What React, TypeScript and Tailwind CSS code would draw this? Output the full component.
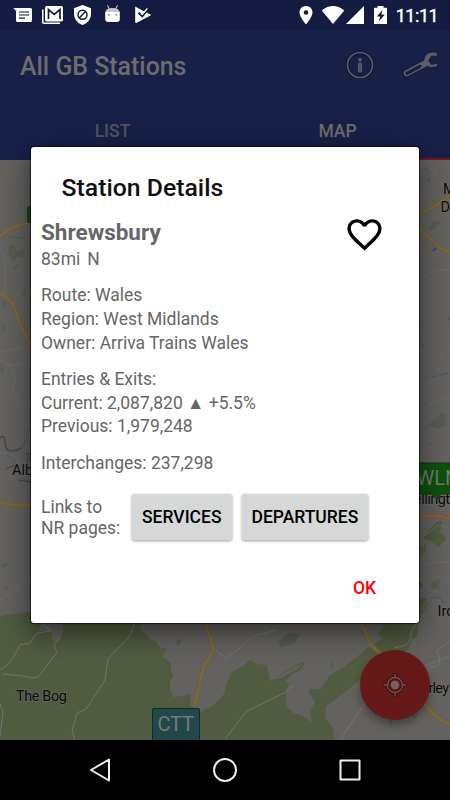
import type { ReactNode } from "react";

interface TextBlock {
    id: string;
    lines: string[];
}

const details: TextBlock[] = [
    { id: "route", lines: ["Route: Wales", "Region: West Midlands", "Owner: Arriva Trains Wales"] },
    { id: "usage", lines: ["Entries & Exits:", "Current: 2,087,820 ▲ +5.5%", "Previous: 1,979,248"] },
    { id: "interchanges", lines: ["Interchanges: 237,298"] },
];

function StatusBar() {
    return (
        <div className="h-[30px] shrink-0 bg-[#141a40] text-white">
            <svg width="450" height="30" viewBox="0 0 450 30" fill="currentColor">
                {/* messages */}
                <path d="M13.3 8H30.5Q32 8 32 9.5V20.500Q32 22 30.500 22H17.500Q16 22 16 20.500V11Z" />
                <path d="M19 12H29M19 15H29M19 18.200H25" stroke="#141a40" strokeWidth="1.200" />
                {/* mail */}
                <path d="M42.800 9.500V22.200Q42.800 23.300 44 23.300H60" fill="none" stroke="currentColor" strokeWidth="1.500" />
                <rect x="45" y="6" width="18" height="15.500" rx="1.500" />
                <path d="M48.500 19V9.500L54.200 14.300L60 9.500V19" fill="none" stroke="#141a40" strokeWidth="1.700" />
                {/* shield */}
                <path d="M82.500 5L91 8.300V14C91 19 87.500 23.300 82.500 25C77.500 23.300 74 19 74 14V8.300Z" />
                <circle cx="82.500" cy="14.700" r="4.500" fill="none" stroke="#141a40" strokeWidth="1.500" />
                <path d="M79.500 17.800L85.500 11.600" stroke="#141a40" strokeWidth="1.500" />
                {/* android head */}
                <path d="M109.300 9L107.500 5.300M115.700 9L117.500 5.300" stroke="#b9bac5" strokeWidth="1.200" />
                <path d="M105.300 12.500Q105.500 8 112.500 8Q119.500 8 119.700 12.500Z" fill="#c6c7d0" />
                <path d="M105.200 12H119.800V19Q119.800 22 116.800 22H108.200Q105.200 22 105.200 19Z" />
                <circle cx="108.800" cy="14.800" r=".9" fill="#777989" />
                <circle cx="116.200" cy="14.800" r=".9" fill="#777989" />
                {/* play protect */}
                <path d="M135.200 7.200Q135.200 6.500 136 7L142 10.300L150.500 14.500Q151.300 15 150.500 15.600L136.200 22.900Q135.200 23.300 135.200 22.300Z" />
                <path d="M138.500 12.800L142.300 16.200L148.500 8.500" fill="none" stroke="#141a40" strokeWidth="2" />
                <path d="M141 13.300L142.300 14.300L147.300 8.500" fill="none" stroke="currentColor" strokeWidth="1.300" />
                {/* location, wifi, signal, battery */}
                <path fillRule="evenodd" d="M306 6C302.300 6 299.500 8.800 299.500 12.400C299.500 17 306 24.300 306 24.300S312.500 17 312.500 12.400C312.500 8.800 309.700 6 306 6ZM306 10.200A2.300 2.300 0 1 1 306 14.800A2.300 2.300 0 1 1 306 10.200Z" />
                <path d="M321.800 10.400Q333 1.500 344.300 10.400L333 24Z" />
                <path d="M364 6V24H346Z" />
                <path d="M377.500 6H383.500V7.800H386Q387 7.800 387 8.800V24H374V8.800Q374 7.800 375 7.800H377.500Z" />
                <path d="M382.500 10L376.800 16.500H380.200L378.800 21.500L384.800 14.600H381.300Z" fill="#141a40" />
                <text x="395.700" y="22" fontSize="18" stroke="currentColor" strokeWidth=".4" textLength="43" fontFamily="Roboto, sans-serif">11:11</text>
            </svg>
        </div>
    );
}

function InfoIcon() {
    return (
        <svg className="size-8" viewBox="344 49 32 32" fill="none">
            <circle cx="360" cy="65" r="12.500" stroke="#10142e" strokeWidth="3.200" />
            <circle cx="360" cy="65" r="12.500" stroke="#5b5d68" strokeWidth="1.600" />
            <rect x="358.500" y="63" width="3" height="9" rx="1" fill="#4a4e61" stroke="#5b5d68" />
            <circle cx="360" cy="59.700" r="1.700" fill="#5b5d68" />
        </svg>
    );
}

function WrenchIcon() {
    return (
        <svg className="h-8 w-10" viewBox="400 49 40 32" fill="#5b5d68" stroke="#10142e" strokeWidth=".8">
            <path
                fillRule="evenodd"
                d="M437.500 53.200C433.500 51 427.800 52 425 56Q423.800 58 424 60L404.500 70.500Q402.300 72.300 403.600 74.800Q405 77.500 407.600 76.700L427.600 66.300Q430.500 68.800 437.500 66.500L437.700 63.300L431.500 64.300L428.800 60.800L431.300 56.300L437.500 56.200ZM406.500 72.200L419.500 65.300Q421.500 64.600 421.300 66.200Q421 67.300 419.500 68L407.800 74.200Q406 74.800 405.700 73.400Q405.700 72.600 406.500 72.200Z"
            />
        </svg>
    );
}

function AppBar() {
    return (
        <header className="flex h-[130px] shrink-0 flex-col bg-[#192048] text-[#6d6d6d]">
            <div className="flex h-[70px] shrink-0 items-center pl-5 pr-[10px]">
                <h1 className="grow pt-[3px] text-[24.9px] font-medium">All GB Stations</h1>
                <InfoIcon />
                <span className="w-6" />
                <WrenchIcon />
            </div>
            <nav className="grid h-[60px] grid-cols-2 text-center text-[17.5px] font-medium leading-[56px]">
                <span className="pt-[3px] text-[#51535d]">LIST</span>
                <span className="h-[60px] border-b-2 border-[#761717] pt-[3px]">MAP</span>
            </nav>
        </header>
    );
}

function MapView() {
    return (
        <svg className="block h-[580px] w-full shrink-0" viewBox="0 160 450 580" fill="none" fontFamily="Roboto, sans-serif">
            <rect y="160" width="450" height="580" fill="#646260" />

            {/* woodland */}
            <g fill="#505b40">
                <path d="M0 616L31 612V620H139L142 630L150 639L157 642L160 647L167 649L163 657L171 663V671L174 675L170 682V690L174 697L190 694V706L202 712L214 705L225 693V740H0Z" />
                <path d="M202 712L225 687L232 672L243 666L250 660L259 665L272 661L305 662L276 677L267 681L281 678L296 670L305 662L301 670L291 675L286 681L289 684L286 692L287 707L294 713L302 716L312 722L310 711L315 702L309 693L310 689L321 689L330 675L345 666L357 657L366 649L382 639L378 634L386 624L418 622V636L412 640L408 650L397 654L388 662L375 670L367 674L356 683L345 692L333 701L326 706L325 717L333 728L335 740H205Z" />
                <path d="M419 599L427 598V606L421 615H419ZM430 528L438 521L442 522L440 533L447 538L439 547L431 541L423 539Z" />
                <path d="M419 547L426 544V551L421 556ZM431 582L439 579L440 590L431 588Z" opacity=".7" />
            </g>
            {/* built-up clearings in the woodland */}
            <path d="M42 622H64L62 636L56 643L52 639L51 631H38ZM190 694L195 700L200 712L214 705L225 693V622H139L142 630L150 639L157 642L160 647L167 649L163 657L171 663V671L174 675L170 682V690L174 697Z" fill="#646260" />
            <path d="M267 666L250 660L272 661H305L291 668L276 677L270 681Z" fill="#646260" />
            <g fill="#575c50">
                <path d="M8 247l5-3 4 7 8-2-2 8-7 1-3 5-4-7ZM432 222l9-2-3 7-10 4ZM438 416l4-4 4 3-1 11-7 3-10-4ZM2 303l4-3-1 8ZM21 294l6-6-2 8Z" />
                <path d="M278 642l11-9 12 1-7 9-13 4ZM330 665l4-4-2 8ZM360 630l9 3-5 3ZM176 641l6-2-4 8ZM410 715l9-4-4 8ZM389 719l4 2-2 6ZM422 695l8-4-2 6Z" fill="#525b4d" />
                <path d="M11 268l9-5-3 6ZM2 325l4 3-3 5ZM1 367l3 2-3 5ZM6 455l4-4-1 8ZM1 566l7-4-3 6ZM5 585l3 3-2 3ZM53 666l7-5-3 6ZM96 651l6-3-5 7Z" />
                <path d="M427 179l3-2-1 5ZM424 167l3-1 2 6ZM447 319l3-2v4ZM421 339l3 8-2 1Z" fill="#47595a" />
            </g>

            {/* water */}
            <g stroke="#44566a" strokeWidth="1">
                <path d="M11 237l13 1M20 206l-1 4M5 450Q14 454 20 449T27 431L31 427M433 377l16-4M429 444l4 1M288 634l3 1M292 637l4-1M430 598Q440 595 444 603" />
                <path d="M419 324v3M436 248l-3 3M420 582l2 5" stroke="#294c84" strokeWidth="2" />
            </g>

            {/* minor roads */}
            <g stroke="#6d6b69" strokeWidth="1">
                <path d="M0 247C9 258 2 283 6 300M0 360Q13 371 31 358M3 361Q20 373 14 386T31 404M0 352L31 346M0 452Q24 454 31 483M31 485Q17 492 31 500M0 600L31 577" />
                <path d="M419 164L436 172L443 188M419 279L435 271L450 269M419 388L438 378V361L450 348M419 412L434 402L450 397M419 540L438 525L450 528M419 565L437 562H450M421 610Q430 592 450 579" />
                <path d="M0 670Q10 665 15 654L20 645Q25 643 29 644L37 633L51 631L42 624M60 639L54 645L57 652L49 663L38 677L32 678L23 676L3 674M134 624Q132 637 118 648L108 659L107 665L105 680L92 700L86 709L77 713L72 731L75 740M225 739L245 713L249 710L284 693L293 685M340 740L366 702M394 648L406 645L411 639V631L417 623M430 667Q445 668 437 650L450 641M419 668L450 656M225 660L254 636L277 630M0 704L3 712L0 736M210 645L225 658" stroke="#737472" />
                <path d="M0 438Q5 434 5 442T11 451L22 448M6 469L15 465M18 480L31 482M25 454h4l-2 10" stroke="#464441" strokeWidth="1.200" />
            </g>

            {/* main roads */}
            <g strokeLinecap="round">
                <path d="M0 236Q12 225 31 223M0 293Q13 300 16 313Q22 330 31 346M0 502Q10 506 31 505M419 215Q430 209 450 196M419 228Q443 253 450 252M205 620L214 650L204 665L195 703M360 620L371 645L382 655L425 705Q438 720 450 724" stroke="#6e5e39" strokeWidth="4.500" />
                <path d="M0 236Q12 225 31 223M0 293Q13 300 16 313Q22 330 31 346M0 502Q10 506 31 505M419 215Q430 209 450 196M419 228Q443 253 450 252M205 620L214 650L204 665L195 703M360 620L371 645L382 655L425 705Q438 720 450 724" stroke="#776842" strokeWidth="3" />
                <path d="M419 518Q434 513 450 519" stroke="#7c5738" strokeWidth="5" />
                <path d="M419 518Q434 513 450 519" stroke="#777166" strokeWidth="1" />
            </g>

            {/* place names */}
            <g fill="#090909" fontSize="14.500" stroke="#777570" strokeWidth="1.500" strokeOpacity=".6" paintOrder="stroke">
                <text x="12" y="475">Alb</text>
                <text x="443" y="194">M</text>
                <text x="440.500" y="212">D</text>
                <text x="414" y="504" textLength="36">ellingt</text>
                <text x="437.500" y="616">Iro</text>
                <text x="428.500" y="693" textLength="20.500">rley</text>
                <text x="16" y="701" textLength="51">The Bog</text>
            </g>

            {/* station flags */}
            <rect x="27" y="206" width="10" height="17" rx="1" fill="#214718" />
            <path d="M419 463H451V494H441L437 499L431 494H419Z" fill="#0d520c" stroke="#14350f" />
            <text x="416.500" y="485" fontSize="20" fill="#737b70">WLN</text>
            <rect x="152.500" y="708.500" width="47" height="34" rx="1" fill="#21494a" stroke="#15292b" />
            <text x="157.500" y="731" fontSize="20" textLength="36.500" fill="#737b7b">CTT</text>
        </svg>
    );
}

function LocateButton() {
    return (
        <button className="absolute left-[360px] top-[650px] flex size-[70px] items-center justify-center rounded-full bg-[#661919] shadow-[0_5px_8px_rgba(0,0,0,0.35)]">
            <svg className="size-[26px]" viewBox="0 0 26 26" fill="none">
                <g stroke="#2e1111" strokeWidth="3.200">
                    <circle cx="13" cy="13" r="7.500" />
                    <path d="M13 1.500V6M13 20V24.500M1.500 13H6M20 13H24.500" />
                </g>
                <g stroke="#765454" strokeWidth="1.300">
                    <circle cx="13" cy="13" r="7.500" />
                    <path d="M13 2V6M13 20V24M2 13H6M20 13H24" />
                </g>
                <circle cx="13" cy="13" r="4.200" fill="#7b5f5f" />
            </svg>
        </button>
    );
}

function LinkButton({ children }: { children: ReactNode }) {
    return (
        <button className="h-[46px] rounded-[2px] bg-[#d6d8d7] px-[10px] pt-[2px] text-[17.5px] font-medium text-black shadow-[0_1px_3px_rgba(0,0,0,0.4)]">
            {children}
        </button>
    );
}

function StationDialog() {
    return (
        <div className="absolute left-[31px] top-[147px] flex h-[476px] w-[388px] flex-col rounded-[3px] bg-white px-[10px] text-[17.5px] leading-[23.75px] text-[#666666] shadow-[0_0_1px_1px_rgba(0,0,0,0.6),0_8px_28px_2px_rgba(0,0,0,0.5)]">
            <h2 className="pl-[20.5px] pt-[25px] text-[24.8px] font-medium leading-[32px] text-[#101010]">Station Details</h2>
            <div className="flex justify-between pr-[24px] pt-[14px]">
                <div>
                    <h3 className="text-[22.5px] font-bold leading-[28px]">Shrewsbury</h3>
                    <p className="pt-px leading-[25px]">
                        83mi<span className="pl-[7px]">N</span>
                    </p>
                </div>
                <svg className="-mt-1 size-[41px]" viewBox="0 0 24 24" fill="#000">
                    <path d="M16.500 3c-1.740 0-3.410.81-4.500 2.090C10.910 3.810 9.240 3 7.500 3 4.420 3 2 5.420 2 8.500c0 3.780 3.400 6.860 8.550 11.540L12 21.350l1.450-1.320C18.600 15.360 22 12.280 22 8.500 22 5.420 19.580 3 16.500 3zm-4.400 15.550l-.1.100-.1-.1C7.140 14.240 4 11.390 4 8.500 4 6.500 5.500 5 7.500 5c1.540 0 3.040.99 3.570 2.360h1.870C13.460 5.990 14.960 5 16.500 5c2 0 3.500 1.500 3.500 3.500 0 2.890-3.140 5.740-7.900 10.050z" />
                </svg>
            </div>
            <div className="flex flex-col gap-[12.5px] pt-3">
                {details.map((block) => (
                    <div key={block.id}>
                        {block.lines.map((line) => (
                            <p key={line}>{line}</p>
                        ))}
                    </div>
                ))}
            </div>
            <div className="flex items-center gap-[10px] pt-[19px]">
                <p className="w-[81px] pt-px leading-[20.5px]">
                    Links to
                    <br />
                    NR pages:
                </p>
                <LinkButton>SERVICES</LinkButton>
                <LinkButton>DEPARTURES</LinkButton>
            </div>
            <div className="flex grow items-end justify-end pb-[22px] pr-[33px]">
                <button className="text-[17.5px] font-medium text-[#ff0000]">OK</button>
            </div>
        </div>
    );
}

function NavBar() {
    return (
        <div className="flex h-[60px] shrink-0 items-center justify-center gap-[101px] bg-black text-[#eeeeee]">
            <svg className="size-6" viewBox="0 0 24 24" fill="none" stroke="currentColor" strokeWidth="2" strokeLinejoin="round">
                <path d="M21 1.500V22.500L3 12Z" />
            </svg>
            <svg className="size-6" viewBox="0 0 24 24" fill="none" stroke="currentColor" strokeWidth="2">
                <circle cx="12" cy="12" r="11" />
            </svg>
            <svg className="size-6" viewBox="0 0 24 24" fill="none" stroke="currentColor" strokeWidth="2" strokeLinejoin="round">
                <rect x="2.500" y="2.500" width="19" height="19" />
            </svg>
        </div>
    );
}

export default function App() {
    return (
        <div className="relative flex h-[800px] w-[450px] flex-col overflow-hidden bg-black font-['Roboto',sans-serif]">
            <StatusBar />
            <AppBar />
            <MapView />
            <NavBar />
            <LocateButton />
            <StationDialog />
        </div>
    );
}
